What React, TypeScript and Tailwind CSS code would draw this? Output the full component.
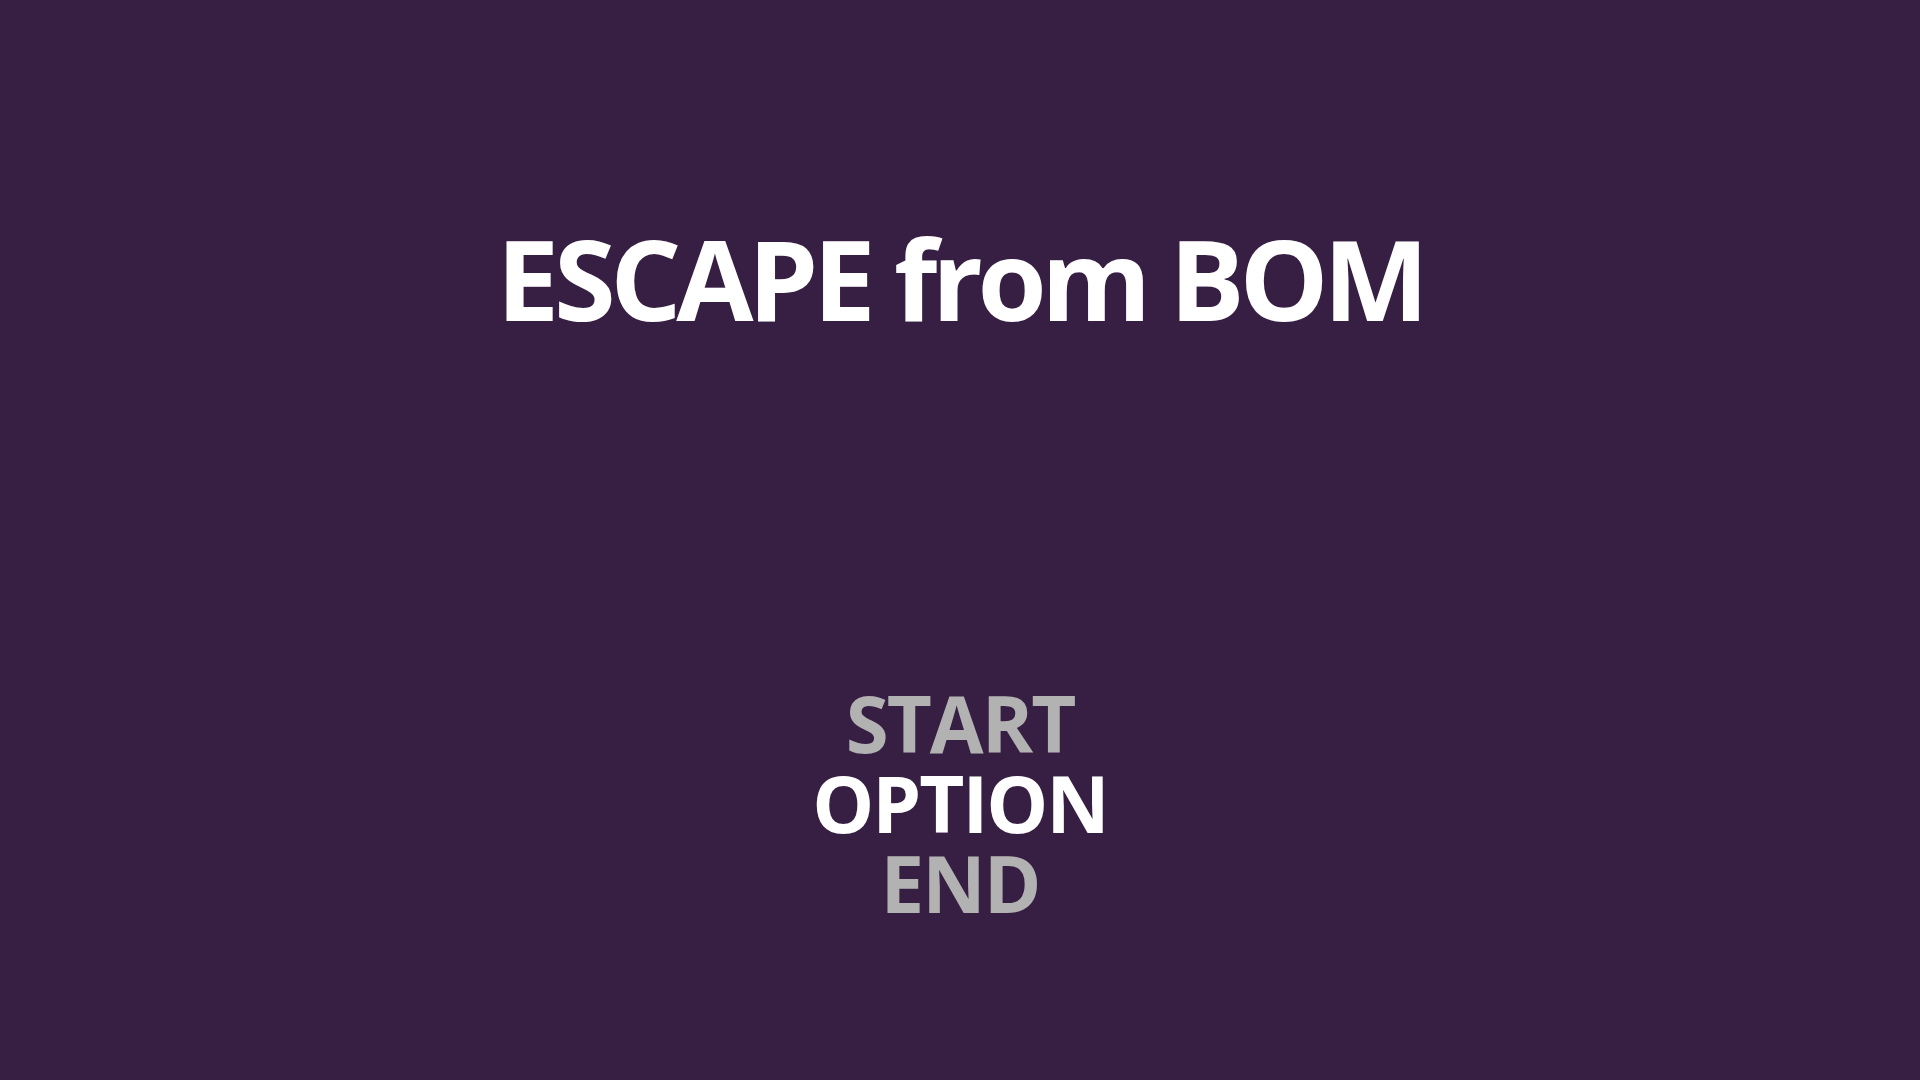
export default function App() {
  return (
    <div className="w-[1920px] h-[1080px] bg-[#371f44] flex flex-col items-center overflow-hidden font-['Open_Sans',sans-serif] font-bold">
      <h1 className="mt-[222px] text-[112px] leading-none text-white tracking-[-5.4px]">ESCAPE from BOM</h1>
      <ul className="mt-[349px] flex flex-col items-center text-[78px] leading-[80px] tracking-[-2px]">
        <li className="text-[#b2b2b2]">START</li>
        <li className="text-white">OPTION</li>
        <li className="text-[#b2b2b2]">END</li>
      </ul>
    </div>
  );
}
